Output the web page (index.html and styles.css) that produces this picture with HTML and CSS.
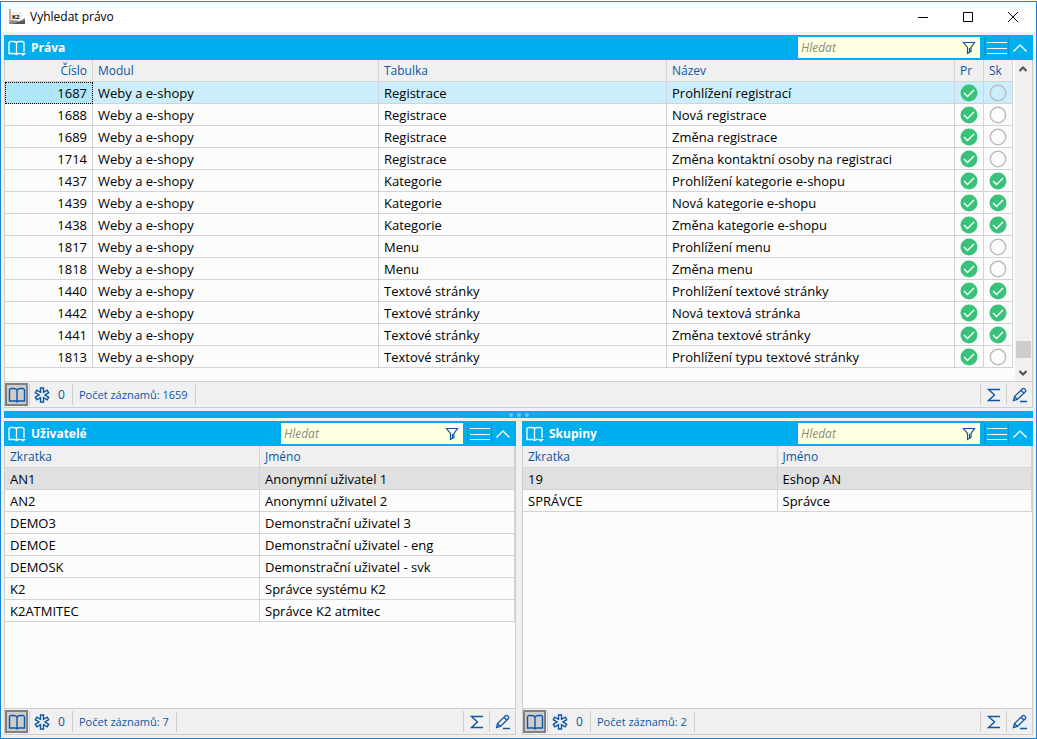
FILE: index.html
```
<!DOCTYPE html>
<html lang="cs">
<head>
<meta charset="utf-8">
<title>Vyhledat právo</title>
<link rel="stylesheet" href="styles.css">
</head>
<body>
<svg class="defs" aria-hidden="true">
  <symbol id="book" viewBox="0 0 18 16"><path d="M9 3C8 1.500 7 1.500 5.500 1.500H3L1.500 2.500V14H7.500L9 15L10.500 14H16.500V2.500L15 1.500H12.500C11 1.500 10 1.500 9 3V14.500"/></symbol>
  <symbol id="bookmenu" viewBox="0 0 20 18"><path d="M8.500 3.500C7.500 2.500 6.500 2.500 5.500 2.500H2.500L1 3.500V14.500H6.500L8.500 15.500L10.500 14.500H12.500M8.500 3.500C9.500 2.500 10.500 2.500 12 2.500H14.500L16 3.500V13M8.500 3.500V15"/><path class="solid" d="M12 14H18L15 17Z"/></symbol>
  <symbol id="funnel" viewBox="0 0 14 14"><path d="M1.500 1.500H12.500L9 6.500V10.500L5.500 12.500V6.500ZM7.500 7V11"/></symbol>
  <symbol id="lines" viewBox="0 0 20 14"><path d="M0 1.500H20M0 7.500H20M0 12.500H20"/></symbol>
  <symbol id="up" viewBox="0 0 16 10"><path d="M1.500 8.500L8 2L14.500 8.500"/></symbol>
  <symbol id="star" viewBox="0 0 16 16"><path d="M6.500 1H9.500V5.300L13.200 3.100L14.700 5.700L11 8L14.700 10.300L13.200 12.900L9.500 10.700V15H6.500V10.700L2.800 12.900L1.300 10.300L5 8L1.300 5.700L2.800 3.100L6.500 5.300Z"/></symbol>
  <symbol id="sum" viewBox="0 0 14 14"><path d="M13 1.500H1.500L7.500 7L1.500 12.500H13"/></symbol>
  <symbol id="pen" viewBox="0 0 16 16"><path d="M1.500 13.500L2.500 9.500L10.500 1.700C12 .5 14.800 3 13.300 4.700L5.300 12.500ZM2.500 9.500L5.300 12.500M9 3.200L11.800 6M8 14.500H15"/></symbol>
  <symbol id="yes" viewBox="0 0 18 18"><circle class="disc" cx="9" cy="9" r="8.500"/><path class="tick" d="M4 9L7.500 12.500L14 6"/></symbol>
  <symbol id="no" viewBox="0 0 18 18"><circle class="ring" cx="9" cy="9" r="7.700"/></symbol>
</svg>

<div class="window">
  <header class="titlebar">
    <svg class="logo" viewBox="0 0 16 16" role="img" aria-label="K2"><path fill="#b4b4b4" d="M0 0H2V12L0 15Z"/><path fill="#8c8c8c" d="M0 15L2 11L11 12L16 9V15Z"/><path fill="#555" d="M3 15L16 11V15Z"/><path fill="#ededed" d="M2 3H13V11H2Z"/><text x="3" y="10">K2</text></svg>
    <h1>Vyhledat právo</h1>
    <button class="wbtn" aria-label="Minimalizovat"><svg viewBox="0 0 12 12"><path d="M1 6.500H11"/></svg></button>
    <button class="wbtn" aria-label="Maximalizovat"><svg viewBox="0 0 12 12"><path d="M1.500 1.500H10.500V10.500H1.500Z"/></svg></button>
    <button class="wbtn" aria-label="Zavřít"><svg viewBox="0 0 12 12"><path d="M1 1L11 11M11 1L1 11"/></svg></button>
  </header>

  <main class="content">
    <section class="panel">
      <div class="bar">
        <button class="bookbtn" aria-label="Nabídka knihy"><svg><use href="#bookmenu"/></svg></button>
        <h2>Práva</h2>
        <div class="search"><input type="text" placeholder="Hledat" aria-label="Hledat práva"><button aria-label="Filtr"><svg><use href="#funnel"/></svg></button></div>
        <button class="menubtn" aria-label="Nabídka"><svg><use href="#lines"/></svg></button>
        <button class="upbtn" aria-label="Sbalit"><svg><use href="#up"/></svg></button>
      </div>
      <div class="body">
        <table class="rights">
          <colgroup><col class="c-num"><col class="c-mod"><col><col><col class="c-flag"><col class="c-flag"></colgroup>
          <thead><tr><th class="num">Číslo</th><th>Modul</th><th>Tabulka</th><th>Název</th><th>Pr</th><th>Sk</th></tr></thead>
          <tbody id="rights"></tbody>
        </table>
        <div class="scroll">
          <button aria-label="Nahoru"><svg viewBox="0 0 8 6"><path d="M0.500 5L4 1.500L7.500 5"/></svg></button>
          <div class="track"><div class="thumb"></div></div>
          <button aria-label="Dolů"><svg viewBox="0 0 8 6"><path d="M0.500 1L4 4.500L7.500 1"/></svg></button>
        </div>
      </div>
      <div class="status">
        <button class="pressed" aria-label="Kniha"><svg><use href="#book"/></svg></button>
        <button class="marks" aria-label="Označené záznamy"><svg><use href="#star"/></svg><span>0</span></button>
        <span class="count">Počet záznamů: 1659</span>
        <button class="tool first" aria-label="Součet"><svg><use href="#sum"/></svg></button>
        <button class="tool" aria-label="Upravit"><svg><use href="#pen"/></svg></button>
      </div>
    </section>

    <div class="splitter"><i></i><i></i><i></i></div>

    <div class="pair">
      <section class="panel">
        <div class="bar">
          <button class="bookbtn" aria-label="Nabídka knihy"><svg><use href="#bookmenu"/></svg></button>
          <h2>Uživatelé</h2>
          <div class="search"><input type="text" placeholder="Hledat" aria-label="Hledat uživatele"><button aria-label="Filtr"><svg><use href="#funnel"/></svg></button></div>
          <button class="menubtn" aria-label="Nabídka"><svg><use href="#lines"/></svg></button>
          <button class="upbtn" aria-label="Sbalit"><svg><use href="#up"/></svg></button>
        </div>
        <div class="body">
          <table>
            <thead><tr><th>Zkratka</th><th>Jméno</th></tr></thead>
            <tbody>
              <tr class="current"><td>AN1</td><td>Anonymní uživatel 1</td></tr>
              <tr><td>AN2</td><td>Anonymní uživatel 2</td></tr>
              <tr><td>DEMO3</td><td>Demonstrační uživatel 3</td></tr>
              <tr><td>DEMOE</td><td>Demonstrační uživatel - eng</td></tr>
              <tr><td>DEMOSK</td><td>Demonstrační uživatel - svk</td></tr>
              <tr><td>K2</td><td>Správce systému K2</td></tr>
              <tr><td>K2ATMITEC</td><td>Správce K2 atmitec</td></tr>
            </tbody>
          </table>
        </div>
        <div class="status">
          <button class="pressed" aria-label="Kniha"><svg><use href="#book"/></svg></button>
          <button class="marks" aria-label="Označené záznamy"><svg><use href="#star"/></svg><span>0</span></button>
          <span class="count">Počet záznamů: 7</span>
          <button class="tool first" aria-label="Součet"><svg><use href="#sum"/></svg></button>
          <button class="tool" aria-label="Upravit"><svg><use href="#pen"/></svg></button>
        </div>
      </section>

      <section class="panel">
        <div class="bar">
          <button class="bookbtn" aria-label="Nabídka knihy"><svg><use href="#bookmenu"/></svg></button>
          <h2>Skupiny</h2>
          <div class="search"><input type="text" placeholder="Hledat" aria-label="Hledat skupiny"><button aria-label="Filtr"><svg><use href="#funnel"/></svg></button></div>
          <button class="menubtn" aria-label="Nabídka"><svg><use href="#lines"/></svg></button>
          <button class="upbtn" aria-label="Sbalit"><svg><use href="#up"/></svg></button>
        </div>
        <div class="body">
          <table>
            <thead><tr><th>Zkratka</th><th>Jméno</th></tr></thead>
            <tbody>
              <tr class="current"><td>19</td><td>Eshop AN</td></tr>
              <tr><td>SPRÁVCE</td><td>Správce</td></tr>
            </tbody>
          </table>
        </div>
        <div class="status">
          <button class="pressed" aria-label="Kniha"><svg><use href="#book"/></svg></button>
          <button class="marks" aria-label="Označené záznamy"><svg><use href="#star"/></svg><span>0</span></button>
          <span class="count">Počet záznamů: 2</span>
          <button class="tool first" aria-label="Součet"><svg><use href="#sum"/></svg></button>
          <button class="tool" aria-label="Upravit"><svg><use href="#pen"/></svg></button>
        </div>
      </section>
    </div>
  </main>
</div>
<script src="rights.js"></script>
</body>
</html>
```
FILE: rights.js
```
// number, table, name, allowed for user (Pr), allowed for group (Sk)
const rows = [
  [1687, "Registrace", "Prohlížení registrací", 1, 0],
  [1688, "Registrace", "Nová registrace", 1, 0],
  [1689, "Registrace", "Změna registrace", 1, 0],
  [1714, "Registrace", "Změna kontaktní osoby na registraci", 1, 0],
  [1437, "Kategorie", "Prohlížení kategorie e-shopu", 1, 1],
  [1439, "Kategorie", "Nová kategorie e-shopu", 1, 1],
  [1438, "Kategorie", "Změna kategorie e-shopu", 1, 1],
  [1817, "Menu", "Prohlížení menu", 1, 0],
  [1818, "Menu", "Změna menu", 1, 0],
  [1440, "Textové stránky", "Prohlížení textové stránky", 1, 1],
  [1442, "Textové stránky", "Nová textová stránka", 1, 1],
  [1441, "Textové stránky", "Změna textové stránky", 1, 1],
  [1813, "Textové stránky", "Prohlížení typu textové stránky", 1, 0]
];
const flag = on => `<td class="flag"><svg role="img" aria-label="${on ? "Ano" : "Ne"}"><use href="#${on ? "yes" : "no"}"/></svg></td>`;
document.getElementById("rights").innerHTML = rows.map((r, i) =>
  `<tr${i ? "" : ' class="selected"'}><td class="num">${r[0]}</td><td>Weby a e-shopy</td><td>${r[1]}</td><td>${r[2]}</td>${flag(r[3])}${flag(r[4])}</tr>`
).join("");
```
FILE: styles.css
```
* { box-sizing: border-box; }
body {
  margin: 0;
  padding-top: 1px;
  height: 100vh;
  background: #fff;
  color: #000;
  font: 13px/20px "Open Sans", "Noto Sans", sans-serif;
}
h1, h2 { margin: 0; }
button {
  display: flex;
  align-items: center;
  justify-content: center;
  flex: none;
  margin: 0;
  padding: 0;
  border: 0;
  background: none;
  color: inherit;
  font: inherit;
}
svg { display: block; fill: none; stroke: currentColor; }
.defs { position: absolute; width: 0; height: 0; }
.window {
  display: flex;
  flex-direction: column;
  height: 100%;
  border: 1px solid #1883d7;
  background: #f0f0f0;
}

.titlebar {
  display: flex;
  align-items: center;
  flex: none;
  height: 30px;
  padding: 0 1px 0 8px;
  background: #fff;
}
.titlebar h1 { flex: 1; margin-left: 5px; font: 12px/20px "Open Sans", sans-serif; }
.logo { width: 16px; height: 16px; stroke: none; }
.logo text { fill: #000; font: bold 6px "Open Sans", sans-serif; }
.wbtn { width: 45px; height: 30px; }
.wbtn svg { width: 12px; height: 12px; }

.content {
  display: flex;
  flex-direction: column;
  flex: 1;
  min-height: 0;
  padding: 3px;
}
.panel { display: flex; flex-direction: column; min-width: 0; min-height: 0; }
.bar {
  display: flex;
  align-items: center;
  flex: none;
  height: 25px;
  background: #00adef;
  color: #fff;
}
.bar h2 { flex: 1; font: bold 12px/20px "Open Sans", sans-serif; }
.bookbtn { width: 27px; height: 25px; }
.bookbtn svg { width: 20px; height: 18px; stroke-width: 1.3; }
.bookbtn .solid, .solid { fill: currentColor; stroke: none; }
.search { display: flex; width: 182px; height: 21px; margin-right: 4px; background: #ffffe1; color: #0c56a4; }
.search input {
  flex: 1;
  min-width: 0;
  padding: 0 3px;
  border: 0;
  background: none;
  color: #000;
  font: italic 12px/20px "Open Sans", sans-serif;
}
.search input::placeholder { color: #8a8a80; opacity: 1; }
.search button { width: 22px; }
.search svg { width: 14px; height: 14px; stroke-width: 1.2; }
.menubtn { width: 25px; height: 21px; border: solid #0098d4; border-width: 0 1px; }
.menubtn svg { width: 20px; height: 14px; }
.upbtn { width: 24px; height: 25px; padding-right: 2px; }
.upbtn svg { width: 16px; height: 10px; stroke-width: 1.4; }

.body {
  display: flex;
  align-items: flex-start;
  flex: 1;
  min-height: 0;
  border: 1px solid #cdcdcd;
  border-top: 0;
  background: #fcfcfc;
}
.content > .panel .body { min-height: 322px; }
table { flex: 1; min-width: 0; table-layout: fixed; width: 100%; border-spacing: 0; }
th, td {
  height: 22px;
  padding: 0 5px;
  border: solid #d3d3d3;
  border-width: 0 1px 1px 0;
  line-height: 20px;
  text-align: left;
  white-space: nowrap;
  overflow: hidden;
}
th { background: #f0f0f0; color: #0c56a4; font: 12px/20px "Open Sans", sans-serif; }
.num { text-align: right; }
.c-num { width: 88px; }
.c-mod { width: 286px; }
.c-flag { width: 29px; }
.flag { padding: 0; }
.flag svg { width: 18px; height: 18px; margin: 0 auto; }
.disc { fill: #3bc27a; stroke: none; }
.tick { stroke: #fff; stroke-width: 1.3; }
.ring { stroke: #bdbdbd; stroke-width: 1.5; }
.selected td { background: #caeefb; }
.selected .num { background: #b0e6fa; outline: 1px dotted #000; outline-offset: -1px; }
.selected .ring { stroke: #98b4be; }
.current td { background: #e0e0e0; }

.scroll {
  display: flex;
  flex-direction: column;
  align-self: stretch;
  flex: none;
  width: 17px;
  margin-left: 2px;
  padding-right: 1px;
  background: #f0f0f0;
  color: #505050;
}
.scroll button { height: 17px; }
.scroll svg { width: 8px; height: 6px; stroke-width: 2; }
.track { display: flex; flex-direction: column; justify-content: flex-end; flex: 1; padding: 0 0 6px 1px; }
.thumb { height: 17px; background: #cdcdcd; }

.status {
  display: flex;
  align-items: center;
  flex: none;
  height: 26px;
  border: 1px solid #cdcdcd;
  border-top: 0;
  color: #0c56a4;
  font: 12px/20px "Open Sans", sans-serif;
}
.pressed { width: 23px; height: 23px; border: 2px solid #808080; background: #cdcdcd; }
.pressed svg { width: 18px; height: 16px; stroke-width: 1.4; }
.marks { gap: 8px; width: 44px; height: 21px; margin-left: 1px; padding-left: 4px; border: solid #cdcdcd; border-width: 0 1px; justify-content: flex-start; }
.marks svg { width: 16px; height: 16px; stroke-width: 1.4; }
.count { padding: 0 7px 0 6px; border-right: 1px solid #cdcdcd; font-size: 11px; }
.tool { width: 26px; height: 21px; border-left: 1px solid #cdcdcd; }
.tool svg { width: 16px; height: 16px; stroke-width: 1.3; }
.first { margin-left: auto; }
.first svg { width: 14px; height: 14px; stroke-width: 1.4; }

.splitter {
  display: flex;
  align-items: center;
  justify-content: center;
  gap: 4px;
  flex: none;
  height: 7px;
  margin: 3px 0;
  background: #00adef;
}
.splitter i { width: 4px; height: 4px; border-radius: 2px; background: #5ccbf5; }
.pair { display: grid; grid-template-columns: 512fr 511fr; gap: 6px; flex: 1; min-height: 0; }
```
